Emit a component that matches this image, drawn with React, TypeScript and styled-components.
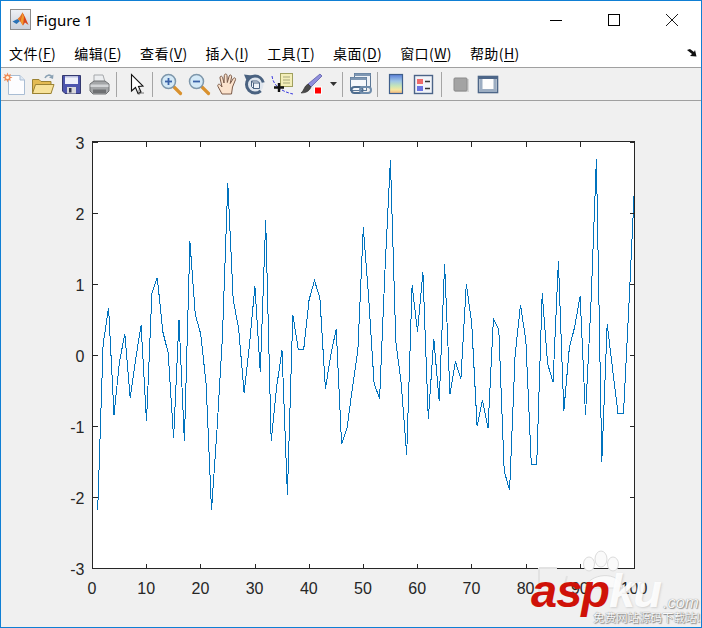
import React from 'react';
import styled, { createGlobalStyle } from 'styled-components';

const Global = createGlobalStyle`
  html, body { margin: 0; padding: 0; background: #fff; }
  * { box-sizing: border-box; }
`;

const Window = styled.div`
  position: relative;
  width: 702px;
  height: 628px;
  border: 1px solid #0f7fd4;
  background: #f0f0f0;
  display: flex;
  flex-direction: column;
  overflow: hidden;
  font-family: "Noto Sans", "Noto Sans CJK SC", sans-serif;
  color: #000;
`;
const TitleBar = styled.header`
  height: 37px;
  background: #fff;
  display: flex;
  align-items: center;
  padding-left: 9px;
  flex: none;
`;
const Title = styled.span`
  margin-left: 5px;
  font-size: 15px;
  line-height: 20px;
`;
const Controls = styled.div`
  margin-left: auto;
  display: flex;
`;
const ControlButton = styled.div`
  width: 58px;
  height: 37px;
  display: flex;
  align-items: center;
  justify-content: center;
`;
const MenuBar = styled.nav`
  height: 30px;
  background: #fff;
  border-bottom: 1px solid #a0a0a0;
  display: flex;
  align-items: center;
  gap: 18px;
  padding: 0 4px 0 8px;
  font-family: "Noto Sans CJK SC", "Noto Sans", sans-serif;
  font-size: 14px;
  letter-spacing: 0.4px;
  flex: none;
`;
const MenuItem = styled.span`
  white-space: nowrap;
  line-height: 20px;
`;
const Mnemonic = styled.span`
  text-decoration: underline;
  text-underline-offset: 2px;
  text-decoration-thickness: 1px;
`;
const DockArrow = styled.svg`
  margin-left: auto;
  flex: none;
`;
const Toolbar = styled.div`
  height: 33px;
  background: #f0f0f0;
  border-bottom: 1px solid #a0a0a0;
  display: flex;
  align-items: center;
  flex: none;
`;
const ToolButton = styled.div<{ $w?: number }>`
  width: ${p => p.$w ?? 28}px;
  height: 32px;
  display: flex;
  align-items: center;
  justify-content: center;
  flex: none;
`;
const ToolSep = styled.div<{ $l: number; $r: number }>`
  width: 1px;
  height: 25px;
  background: #a5a5a5;
  margin: 0 ${p => p.$r}px 0 ${p => p.$l}px;
  flex: none;
`;
const FigureArea = styled.main`
  flex: 1;
  background: #f0f0f0;
  min-height: 0;
`;
const PlotSvg = styled.svg`
  display: block;
  width: 700px;
  height: 526px;
`;
const AxisLabel = styled.text`
  font-family: "Liberation Sans", Arial, sans-serif;
  font-size: 16px;
  fill: #262626;
`;
const Watermark = styled.div`
  position: absolute;
  left: 500px;
  top: 545px;
  width: 200px;
  height: 81px;
  pointer-events: none;
`;
const Paw = styled.svg`
  position: absolute;
  left: 0;
  top: 0;
`;
const Brand = styled.span`
  position: absolute;
  left: 30px;
  top: 15px;
  font-family: "Liberation Sans", Arial, sans-serif;
  font-style: italic;
  font-weight: 700;
  font-size: 47px;
  line-height: 60px;
  white-space: nowrap;
`;
const BrandRed = styled.span`
  color: #cf1208;
  letter-spacing: -1px;
`;
const BrandWhite = styled.span`
  color: rgba(255,255,255,.92);
  letter-spacing: -2px;
  text-shadow: 1px 1px 2px rgba(120,120,120,.25);
`;
const BrandCom = styled.span`
  position: absolute;
  left: 162px;
  top: 46px;
  font-family: "Liberation Sans", Arial, sans-serif;
  font-style: italic;
  font-size: 16.5px;
  line-height: 20px;
  color: #f6f6f6;
  text-shadow: 0 0 1px #777, 1px 1px 1px #999;
`;
const BrandSlogan = styled.span`
  position: absolute;
  left: 92px;
  top: 64px;
  font-family: "Noto Sans CJK SC", sans-serif;
  font-size: 11.5px;
  line-height: 15px;
  color: #fafafa;
  white-space: nowrap;
  text-shadow: 0 0 1px #666, 1px 1px 1px #888;
`;

const data = [
  -2.18,0.15,0.67,-0.84,-0.1,0.3,-0.6,-0.05,0.42,-0.93,
  0.87,1.09,0.33,0.03,-1.17,0.5,-1.21,1.6,0.57,0.3,
  -0.4,-2.18,-1.05,0.25,2.42,0.78,0.38,-0.53,0.15,0.97,
  -0.24,1.9,-1.21,-0.45,0.07,-1.96,0.57,0.08,0.08,0.78,
  1.05,0.8,-0.47,0,0.37,-1.25,-1.03,-0.45,0.08,1.8,
  0.8,-0.4,-0.61,1.2,2.75,0.2,-0.4,-1.4,0.98,0.33,
  1.17,-0.9,0.23,-0.65,1.28,-0.55,-0.09,-0.33,1,0.45,
  -1,-0.63,-1.03,0.51,0.36,-1.63,-1.9,0,0.71,0.2,
  -1.54,-1.54,0.87,-0.12,-0.38,1.32,-0.79,0.1,0.4,0.83,
  -0.84,0.7,2.76,-1.5,0.44,-0.2,-0.82,-0.82,0.7,2.32,
];
const X0 = 92.3, XS = 5.42, Y0 = 355.2, YS = 71.1;
const points = data.map((v, i) => `${(X0 + XS * (i + 1)).toFixed(1)},${(Y0 - YS * v).toFixed(1)}`).join(' ');
const xTicks = [0,10,20,30,40,50,60,70,80,90,100];
const yTicks = [3,2,1,0,-1,-2,-3];
const tx = (v: number) => Math.round(92 + 5.42 * v) + 0.5;
const ty = (v: number) => Math.round(355 - 71.1 * v) + 0.5;

const Plot = () => (
  <PlotSvg viewBox="1 101 700 526">
    <rect x="92.5" y="141.5" width="542" height="427" fill="#fff" />
    <polyline points={points} fill="none" stroke="#0072BD" strokeWidth="1" shapeRendering="crispEdges" />
    <g stroke="#262626" strokeWidth="1" shapeRendering="crispEdges" fill="none">
      <rect x="92.5" y="141.5" width="542" height="427" />
      {xTicks.map(v => (
        <g key={v}>
          <line x1={tx(v)} x2={tx(v)} y1="141.5" y2="146.5" />
          <line x1={tx(v)} x2={tx(v)} y1="563.5" y2="568.5" />
        </g>
      ))}
      {yTicks.map(v => (
        <g key={v}>
          <line x1="92.5" x2="97.5" y1={ty(v)} y2={ty(v)} />
          <line x1="629.5" x2="634.5" y1={ty(v)} y2={ty(v)} />
        </g>
      ))}
    </g>
    {xTicks.map(v => (
      <AxisLabel key={v} x={92 + 5.42 * v} y="594" textAnchor="middle">{v}</AxisLabel>
    ))}
    {yTicks.map(v => (
      <AxisLabel key={v} x="84.5" y={ty(v) + 6} textAnchor="end">{v < 0 ? `-${-v}` : v}</AxisLabel>
    ))}
  </PlotSvg>
);

const MatlabLogo = () => (
  <svg width="21" height="21" viewBox="0 0 21 21">
    <defs>
      <linearGradient id="logoBg" x1="0" y1="0" x2="0" y2="1">
        <stop offset="0" stopColor="#eef1f5" />
        <stop offset="1" stopColor="#c9d0da" />
      </linearGradient>
    </defs>
    <rect x="0.5" y="0.5" width="20" height="20" fill="url(#logoBg)" stroke="#8c8c8c" />
    <path d="M2.5 12.5 L7.5 10 L10 12 L6.5 15 Z" fill="#2a72b5" />
    <path d="M7.5 10 L10 7.5 L12.5 3.5 L14 7 L10 12 Z" fill="#e2762a" />
    <path d="M12.5 3.5 L15 8 L18.5 16 L15 13.5 L13 16.5 L10 12 Z" fill="#d8461c" />
    <path d="M12.5 3.5 L14 8 L13 16.5 L10.5 12.5 Z" fill="#f19a2f" />
  </svg>
);

const IconNew = () => (
  <svg width="24" height="24" viewBox="0 0 24 24">
    <path d="M5.5 3.5 H17 L21.5 8 V22.5 H5.5 Z" fill="#fdfdff" stroke="#a9bdd4" />
    <path d="M17 3.5 V8 H21.5" fill="#dfe8f2" stroke="#a9bdd4" />
    <path d="M4.5 .5 L5.5 3 L8 2 L7 4.5 L9.5 5.5 L7 6.5 L8 9 L5.5 8 L4.5 10.5 L3.5 8 L1 9 L2 6.5 L-.5 5.5 L2 4.5 L1 2 L3.5 3 Z" fill="#ee8a56" />
    <circle cx="4.5" cy="5.5" r="1.6" fill="#fff1d8" />
  </svg>
);
const IconOpen = () => (
  <svg width="24" height="24" viewBox="0 0 24 24">
    <path d="M14 6 C15.5 2.5 19 2.5 21 4.5" fill="none" stroke="#8aa1b4" strokeWidth="1.6" />
    <path d="M22.5 2.5 L22 7 L18 5.5 Z" fill="#8aa1b4" />
    <path d="M1.5 7.5 H8 L10 9.5 H20 V21.5 H1.5 Z" fill="#e3bb53" stroke="#9b8233" />
    <path d="M1.5 21.5 L4.5 12.5 H23 L20 21.5 Z" fill="#f7e29a" stroke="#9b8233" />
  </svg>
);
const IconSave = () => (
  <svg width="24" height="24" viewBox="0 0 24 24">
    <path d="M3.5 3.5 H21.5 V21.5 H6 L3.5 19 Z" fill="#4d55ad" stroke="#34396f" />
    <rect x="6" y="4" width="13" height="8" fill="#eef0fa" />
    <rect x="6" y="4" width="13" height="1.5" fill="#b8bde0" />
    <rect x="8" y="15" width="9" height="6.5" fill="#d8d8dc" />
    <rect x="10" y="16" width="2.5" height="4.5" fill="#33374f" />
  </svg>
);
const IconPrint = () => (
  <svg width="24" height="24" viewBox="0 0 24 24">
    <path d="M7 3 H16 L18 10 H7 Z" fill="#eceef0" stroke="#a5a8ab" />
    <path d="M3 12 L7 9 H18 L22 12 V19 L19 22 H6 L3 19 Z" fill="#a4a6a8" stroke="#707274" />
    <path d="M3.5 12.5 H21.5 V15 H3.5 Z" fill="#d3d5d7" />
    <path d="M6 17.5 H19 V21 H6 Z" fill="#6e7072" />
  </svg>
);
const IconArrow = () => (
  <svg width="24" height="24" viewBox="0 0 24 24">
    <path d="M6.5 2.5 V19 L10.5 15.5 L13 21.5 L16 20 L13.5 14.5 L18 14 Z" fill="#fff" stroke="#111" strokeWidth="1.1" strokeLinejoin="miter" />
    <path d="M14 17.5 V22.5 L15.5 21 L19 21" fill="none" stroke="#555" strokeWidth=".8" />
  </svg>
);
const Magnifier = ({ plus }: { plus: boolean }) => (
  <svg width="24" height="24" viewBox="0 0 24 24">
    <path d="M14.5 14.5 L21.5 21.5" stroke="#d9912e" strokeWidth="3.2" strokeLinecap="round" />
    <circle cx="9.5" cy="9.5" r="7" fill="#d4e9f7" stroke="#7e97ab" strokeWidth="1.5" />
    <path d="M6 9.5 H13" stroke="#3a62a8" strokeWidth="1.8" />
    {plus && <path d="M9.5 6 V13" stroke="#3a62a8" strokeWidth="1.8" />}
  </svg>
);
const IconHand = () => (
  <svg width="24" height="24" viewBox="0 0 24 24">
    <path d="M7 22 L3 14.5 C2 12.5 4 11.5 5.5 13 L7 15 L5 6 C4.6 4 7 3.5 7.6 5.5 L9 11 L9.3 3.5 C9.4 1.5 11.9 1.5 12 3.5 L12.3 10.5 L14.2 4 C14.8 2.2 17 3 16.6 5 L15.2 11.5 L18.3 6.5 C19.4 5 21.2 6.2 20.4 8 L17.5 15 L16.5 22 Z" fill="#fbe2cc" stroke="#7a5a48" strokeWidth="1" strokeLinejoin="round" />
  </svg>
);
const IconRotate = () => (
  <svg width="24" height="24" viewBox="0 0 24 24">
    <circle cx="12" cy="12.5" r="8.5" fill="#dfe6ee" stroke="#4a6280" strokeWidth="3" strokeDasharray="44 10" strokeDashoffset="-7" />
    <path d="M1 2.5 L9 3.5 L4 9.5 Z" fill="#4a6280" />
    <path d="M8.5 9 H14.5 L16.5 11 V16.5 H10.5 L8.5 14.5 Z" fill="#eef3f8" stroke="#4a6280" />
    <path d="M8.5 9 L10.5 11 H16.5 M10.5 11 V16.5" fill="none" stroke="#4a6280" />
  </svg>
);
const IconDataTip = () => (
  <svg width="24" height="24" viewBox="0 0 24 24">
    <path d="M1 4 C2 12 8 19 22 22" fill="none" stroke="#3a3adf" strokeWidth="1" strokeDasharray="3 1.5" />
    <rect x="9.5" y="1.5" width="12" height="13" fill="#f3eeb8" stroke="#a0a05f" />
    <path d="M12 5 H19 M12 8 H19 M12 11 H19" stroke="#a7a77a" />
    <path d="M8 11 V20 M3 15.5 H13" stroke="#111" strokeWidth="2.4" />
  </svg>
);
const IconBrush = () => (
  <svg width="24" height="24" viewBox="0 0 24 24">
    <path d="M21 2 L23 4 L12 15 L9 12 Z" fill="#8f8fdc" stroke="#5d5da8" strokeWidth=".8" />
    <path d="M9 12 L12 15 C11 18 8 21 2 21 C5 19 5 14 9 12 Z" fill="#4a4a4a" stroke="#2a2a2a" strokeWidth=".6" />
    <rect x="15.5" y="15" width="7" height="7" fill="#f00" stroke="#fff" />
  </svg>
);
const IconCaret = () => (
  <svg width="7" height="4" viewBox="0 0 7 4">
    <path d="M0 0 H7 L3.5 4 Z" fill="#333" />
  </svg>
);
const IconLink = () => (
  <svg width="24" height="24" viewBox="0 0 24 24">
    <rect x="5.5" y="1.5" width="16" height="13" fill="#eef2f7" stroke="#5b7796" />
    <rect x="5.5" y="1.5" width="16" height="2.5" fill="#7e97b3" />
    <rect x="1.5" y="5.5" width="16" height="13" fill="#f6f8fb" stroke="#5b7796" />
    <rect x="1.5" y="5.5" width="16" height="2.5" fill="#7e97b3" />
    <rect x="2.5" y="15" width="11" height="6" rx="3" fill="none" stroke="#4f6d8e" strokeWidth="2" />
    <rect x="11" y="15" width="11" height="6" rx="3" fill="none" stroke="#6f8cab" strokeWidth="2" />
  </svg>
);
const IconColorbar = () => (
  <svg width="24" height="24" viewBox="0 0 24 24">
    <defs>
      <linearGradient id="cbar" x1="0" y1="0" x2="0" y2="1">
        <stop offset="0" stopColor="#5b7fd8" />
        <stop offset=".35" stopColor="#9fc7e6" />
        <stop offset=".6" stopColor="#c6e5b8" />
        <stop offset=".8" stopColor="#f6e7a0" />
        <stop offset="1" stopColor="#f0b27a" />
      </linearGradient>
    </defs>
    <rect x="5.5" y="2.5" width="13" height="19" fill="url(#cbar)" stroke="#3f5f8c" strokeWidth="1.2" />
  </svg>
);
const IconLegend = () => (
  <svg width="24" height="24" viewBox="0 0 24 24">
    <rect x="2.5" y="3.5" width="18" height="18" fill="#f1f3f8" stroke="#4c6488" strokeWidth="1.4" />
    <rect x="5" y="7" width="6" height="5" fill="#ee6a6a" />
    <rect x="5" y="14" width="6" height="5" fill="#6a74e2" />
    <path d="M13 9.5 H18 M13 16.5 H18" stroke="#333" strokeWidth="1.4" />
  </svg>
);
const IconHideTools = () => (
  <svg width="24" height="24" viewBox="0 0 24 24">
    <rect x="7" y="7" width="14" height="13" fill="#d5d5d5" />
    <rect x="6" y="6" width="13" height="13" rx="1" fill="#a3a3a3" stroke="#8b8b8b" />
  </svg>
);
const IconShowTools = () => (
  <svg width="24" height="24" viewBox="0 0 24 24">
    <rect x="2.5" y="4.5" width="19" height="16" fill="#fdfdfd" stroke="#4d6688" strokeWidth="1.6" />
    <rect x="2.5" y="4.5" width="19" height="2.5" fill="#4d6688" />
    <rect x="3.5" y="7" width="3" height="13" fill="#9cadc2" />
    <rect x="17.5" y="7" width="3" height="13" fill="#9cadc2" />
    <rect x="3.5" y="17" width="17" height="3" fill="#9cadc2" />
  </svg>
);

const menus: [string, string][] = [
  ['文件', 'F'], ['编辑', 'E'], ['查看', 'V'], ['插入', 'I'],
  ['工具', 'T'], ['桌面', 'D'], ['窗口', 'W'], ['帮助', 'H'],
];

export default function App() {
  return (
    <Window>
      <Global />
      <TitleBar>
        <MatlabLogo />
        <Title>Figure 1</Title>
        <Controls>
          <ControlButton>
            <svg width="12" height="12" viewBox="0 0 12 12"><path d="M0 6.5 H12" stroke="#000" shapeRendering="crispEdges" /></svg>
          </ControlButton>
          <ControlButton>
            <svg width="12" height="12" viewBox="0 0 12 12"><rect x=".5" y=".5" width="11" height="11" fill="none" stroke="#000" shapeRendering="crispEdges" /></svg>
          </ControlButton>
          <ControlButton>
            <svg width="12" height="12" viewBox="0 0 12 12"><path d="M0 0 L12 12 M12 0 L0 12" stroke="#000" strokeWidth=".9" /></svg>
          </ControlButton>
        </Controls>
      </TitleBar>
      <MenuBar>
        {menus.map(([name, key]) => (
          <MenuItem key={key}>{name}(<Mnemonic>{key}</Mnemonic>)</MenuItem>
        ))}
        <DockArrow width="10" height="8" viewBox="0 0 10 8">
          <path d="M0 1 L3 0 L7 3 L8 1 L9.5 7.5 L3 7 L5 5 Z" fill="#111" />
        </DockArrow>
      </MenuBar>
      <Toolbar>
        <ToolButton><IconNew /></ToolButton>
        <ToolButton><IconOpen /></ToolButton>
        <ToolButton><IconSave /></ToolButton>
        <ToolButton><IconPrint /></ToolButton>
        <ToolSep $l={3} $r={6} />
        <ToolButton><IconArrow /></ToolButton>
        <ToolSep $l={1} $r={4} />
        <ToolButton><Magnifier plus /></ToolButton>
        <ToolButton><Magnifier plus={false} /></ToolButton>
        <ToolButton><IconHand /></ToolButton>
        <ToolButton><IconRotate /></ToolButton>
        <ToolButton><IconDataTip /></ToolButton>
        <ToolButton><IconBrush /></ToolButton>
        <ToolButton $w={16}><IconCaret /></ToolButton>
        <ToolSep $l={1} $r={4} />
        <ToolButton><IconLink /></ToolButton>
        <ToolSep $l={2} $r={4} />
        <ToolButton><IconColorbar /></ToolButton>
        <ToolButton><IconLegend /></ToolButton>
        <ToolSep $l={3} $r={4} />
        <ToolButton><IconHideTools /></ToolButton>
        <ToolButton><IconShowTools /></ToolButton>
      </Toolbar>
      <FigureArea>
        <Plot />
      </FigureArea>
      <Watermark>
        <Paw width="200" height="81" viewBox="0 0 200 81">
          <g fill="#fafafa" stroke="#dcdcdc" strokeWidth="1">
            <ellipse cx="88" cy="18" rx="5.5" ry="7" />
            <ellipse cx="100" cy="13" rx="6" ry="8" />
            <ellipse cx="112" cy="18" rx="5.5" ry="7" />
            <path d="M84 42 C88 27 118 24 122 42 Z" />
          </g>
          <path d="M38 22 H56 M38 22 V46 M66 30 L62 46" stroke="#e2e2e2" strokeWidth="2" fill="none" />
        </Paw>
        <Brand><BrandRed>asp</BrandRed><BrandWhite>ku</BrandWhite></Brand>
        <BrandCom>.com</BrandCom>
        <BrandSlogan>免费网站源码下载站!</BrandSlogan>
      </Watermark>
    </Window>
  );
}
